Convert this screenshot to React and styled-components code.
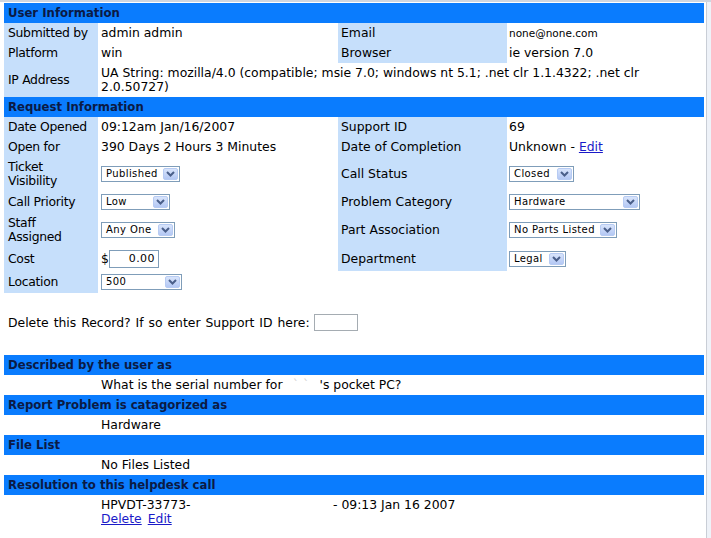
import React from 'react';
import styled, { createGlobalStyle } from 'styled-components';

const GlobalStyle = createGlobalStyle`
  html, body {
    margin: 0;
    padding: 0;
    background: #fff;
  }
  body {
    font-family: "DejaVu Sans", Verdana, sans-serif;
    font-size: 12.4px;
    color: #000;
  }
`;

const Frame = styled.div`
  display: flex;
  min-height: 538px;
  border-top: 2px solid #cfd6e0;
  box-sizing: border-box;
`;

const Main = styled.div`
  flex: 1;
  padding: 1px 2px 0 4px;
`;

const ScrollTrack = styled.div`
  width: 4px;
  background: #eef2f8;
  border-left: 1px solid #c9ced6;
`;

const Header = styled.div`
  background: #0a7cfe;
  color: #0b1a44;
  font-weight: bold;
  font-size: 11.7px;
  height: 20px;
  line-height: 20px;
  padding-left: 4px;
  white-space: nowrap;
`;

const InfoGrid = styled.div`
  display: grid;
  grid-template-columns: 94px 240px 169px 197px;
  line-height: 14px;
`;

const Label = styled.div`
  background: ${({ $blank }) => ($blank ? '#fff' : '#c6dffb')};
  padding: 3px 0 3px ${({ $right }) => ($right ? 3 : 4)}px;
  display: flex;
  align-items: center;
  white-space: nowrap;
  letter-spacing: ${({ $right }) => ($right ? '0' : '-0.3px')};
`;

const Value = styled.div`
  padding: 3px 2px 3px ${({ $pad }) => $pad ?? 3}px;
  display: flex;
  align-items: ${({ $top }) => ($top ? 'flex-start' : 'center')};
  grid-column: ${({ $span }) => ($span ? `span ${$span}` : 'auto')};
  font-size: ${({ $small }) => ($small ? '10.5px' : '12.4px')};
`;

const Link = styled.a`
  color: #1a1ac8;
  text-decoration: underline;
  cursor: pointer;
  margin-right: ${({ $gap }) => ($gap ? '6px' : '0')};
`;

const SelectBox = styled.div`
  display: inline-flex;
  align-items: center;
  justify-content: space-between;
  box-sizing: border-box;
  width: ${({ $w }) => $w}px;
  height: 16px;
  border: 1px solid #7f9db9;
  background: #fff;
  font-size: 10px;
  letter-spacing: 0.4px;
  padding-left: 4px;
  color: #000;
`;

const Arrow = styled.span`
  width: 15px;
  height: 12px;
  margin-right: 1px;
  border-radius: 2px;
  background: linear-gradient(#d8e4fb, #b4c8f4);
  border: 1px solid #b7cbf3;
  box-sizing: border-box;
  display: flex;
  align-items: center;
  justify-content: center;
`;

const TextInput = styled.div`
  box-sizing: border-box;
  width: ${({ $w }) => $w}px;
  height: ${({ $h }) => $h}px;
  border: 1px solid ${({ $light }) => ($light ? '#a5acb2' : '#7f9db9')};
  background: #fff;
  font-size: 11px;
  letter-spacing: 0.4px;
  text-align: right;
  padding-right: 3px;
  line-height: 16px;
`;

const CostWrap = styled.div`
  display: flex;
  align-items: center;
`;

const DeleteRow = styled.div`
  display: flex;
  align-items: center;
  gap: 4px;
  margin: 20px 0 24px;
  padding-left: 4px;
  height: 18px;
  word-spacing: 1px;
`;

const Line = styled.div`
  height: 20px;
  line-height: 20px;
  padding-left: 97px;
  white-space: nowrap;
`;

const Redacted = styled.span`
  display: inline-block;
  width: 37px;
  color: #d4d4d4;
  text-align: center;
`;

const Resolution = styled.div`
  display: grid;
  grid-template-columns: 232px 1fr;
  padding: 3px 0 0 97px;
  line-height: 14px;
`;

const Select = ({ value, w }) => (
  <SelectBox $w={w}>
    <span>{value}</span>
    <Arrow>
      <svg width="9" height="6" viewBox="0 0 9 6">
        <path d="M1 1 L4.5 4.5 L8 1" fill="none" stroke="#4a5f8a" strokeWidth="2" />
      </svg>
    </Arrow>
  </SelectBox>
);

const App = () => (
  <>
    <GlobalStyle />
    <Frame>
      <Main>
        <Header>User Information</Header>
        <InfoGrid>
          <Label>Submitted by</Label>
          <Value>admin admin</Value>
          <Label $right>Email</Label>
          <Value $small $pad={2} $top>none@none.com</Value>

          <Label>Platform</Label>
          <Value>win</Value>
          <Label $right>Browser</Label>
          <Value $pad={2}>ie version 7.0</Value>

          <Label>IP Address</Label>
          <Value $span={3}>
            UA String: mozilla/4.0 (compatible; msie 7.0; windows nt 5.1; .net clr 1.1.4322; .net clr 2.0.50727)
          </Value>
        </InfoGrid>

        <Header>Request Information</Header>
        <InfoGrid>
          <Label>Date Opened</Label>
          <Value>09:12am Jan/16/2007</Value>
          <Label $right>Support ID</Label>
          <Value $pad={2}>69</Value>

          <Label>Open for</Label>
          <Value>390 Days 2 Hours 3 Minutes</Value>
          <Label $right>Date of Completion</Label>
          <Value $pad={2}>Unknown -&nbsp;<Link>Edit</Link></Value>

          <Label>Ticket<br />Visibility</Label>
          <Value><Select value="Published" w={79} /></Value>
          <Label $right>Call Status</Label>
          <Value $pad={2}><Select value="Closed" w={65} /></Value>

          <Label>Call Priority</Label>
          <Value><Select value="Low" w={69} /></Value>
          <Label $right>Problem Category</Label>
          <Value $pad={2}><Select value="Hardware" w={131} /></Value>

          <Label>Staff<br />Assigned</Label>
          <Value><Select value="Any One" w={74} /></Value>
          <Label $right>Part Association</Label>
          <Value $pad={2}><Select value="No Parts Listed" w={108} /></Value>

          <Label>Cost</Label>
          <Value>
            <CostWrap>
              $<TextInput $w={50} $h={18}>0.00</TextInput>
            </CostWrap>
          </Value>
          <Label $right>Department</Label>
          <Value $pad={2}><Select value="Legal" w={57} /></Value>

          <Label>Location</Label>
          <Value><Select value="500" w={81} /></Value>
          <Label $blank />
          <Value />
        </InfoGrid>

        <DeleteRow>
          Delete this Record? If so enter Support ID here:
          <TextInput $w={44} $h={17} $light />
        </DeleteRow>

        <Header>Described by the user as</Header>
        <Line>
          What is the serial number for<Redacted>` `</Redacted>'s pocket PC?
        </Line>

        <Header>Report Problem is catagorized as</Header>
        <Line>Hardware</Line>

        <Header>File List</Header>
        <Line>No Files Listed</Line>

        <Header>Resolution to this helpdesk call</Header>
        <Resolution>
          <span>HPVDT-33773-</span>
          <span>- 09:13 Jan 16 2007</span>
          <span>
            <Link $gap>Delete</Link>
            <Link>Edit</Link>
          </span>
        </Resolution>
      </Main>
      <ScrollTrack />
    </Frame>
  </>
);

export default App;
